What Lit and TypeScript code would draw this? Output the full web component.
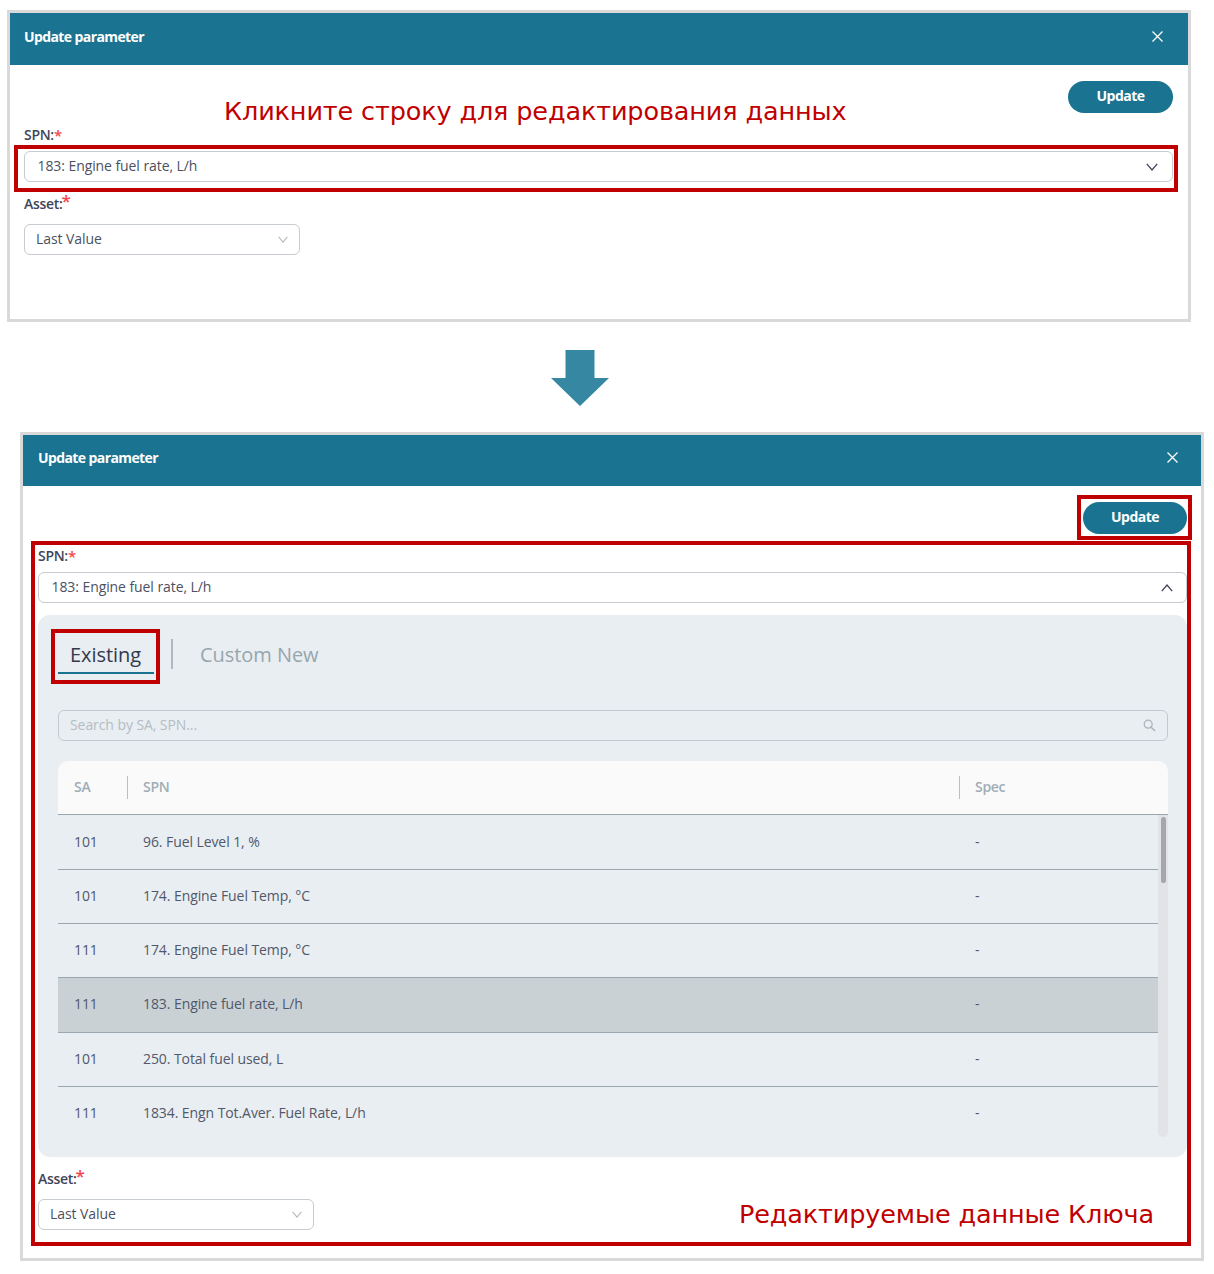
import { LitElement, html, css, svg } from "lit";
import { customElement } from "lit/decorators.js";

const ROWS = [
  ["101", "96. Fuel Level 1, %", false],
  ["101", "174. Engine Fuel Temp, °C", false],
  ["111", "174. Engine Fuel Temp, °C", false],
  ["111", "183. Engine fuel rate, L/h", true],
  ["101", "250. Total fuel used, L", false],
  ["111", "1834. Engn Tot.Aver. Fuel Rate, L/h", false],
] as const;

const chevron = (d: string, cls: string) => html`<svg class=${cls} viewBox="0 0 12 8" preserveAspectRatio="none"><path d=${d} fill="none" stroke-width="1.3"/></svg>`;
const DOWN = "M.8.9 6 6.9 11.2.9";
const UP = "M.8 7.1 6 1.1 11.2 7.1";

@customElement("app-root")
export class AppRoot extends LitElement {
  static styles = css`
    :host { display: block; width: 1214px; height: 1274px; background: #fff; overflow: hidden; font-family: "Open Sans", "Noto Sans", sans-serif; color: #4b5162; }
    * { box-sizing: border-box; }
    .page { display: flex; flex-direction: column; align-items: flex-start; padding-top: 10px; }
    .panel { position: relative; width: 1184px; border: 3px solid #d9d9d9; background: #fff; display: flex; flex-direction: column; }
    .first { margin-left: 7px; height: 312px; }
    .second { margin-left: 20px; height: 829px; }
    .arrow { display: block; margin: 28px 0 26px 551px; }
    .head { height: 52px; flex: none; background: #1a7491; color: #fff; display: flex; align-items: center; justify-content: space-between; padding: 0 25px 5px 14px; font-size: 14px; font-weight: 700; letter-spacing: -.6px; }
    .second .head { height: 51px; padding: 0 23px 6px 15px; }
    .head svg { display: block; }
    .body { padding: 16px 15px 0 14px; display: flex; flex-direction: column; }
    .second .body { padding: 16px 14px 0 15px; }
    .actions { display: flex; justify-content: flex-end; height: 32px; }
    .update { width: 105px; height: 32px; border: 0; padding: 0 0 3px; border-radius: 16px; background: #1a7491; color: #fff; font: 700 14px "Open Sans", sans-serif; letter-spacing: -.5px; }
    .second .update { width: 104px; }
    .label { height: 38px; display: flex; align-items: flex-end; padding-bottom: 6px; font-size: 14px; font-weight: 600; line-height: 20px; letter-spacing: -.3px; color: #3f4557; }
    .label b { color: #f5424f; font-weight: 600; font-size: 15px; }
    .asset { height: 42px; padding-bottom: 10px; }
    .asset b { font-size: 17px; line-height: 20px; margin: 0 0 3px -1px; }
    .select { height: 31px; border: 1px solid #c6ccd1; border-radius: 6px; background: #fff; display: flex; align-items: center; justify-content: space-between; font-size: 14px; letter-spacing: -.08px; padding: 0 14px 2px 12.5px; }
    .second .select { padding-right: 13px; }
    .select svg { width: 12px; height: 8px; margin-top: 2px; display: block; }
    .second .select.small, .select.small { width: 276px; padding: 0 11px 2px 11px; }
    .select.small svg { width: 10px; height: 7px; }
    .dark { stroke: #3e4358; }
    .light { stroke: #b3bac0; }
    .sub { margin-top: 12px; height: 542px; background: #e9eef2; border-radius: 12px; padding: 0 19px 0 20px; display: flex; flex-direction: column; }
    .tabs { height: 95px; display: flex; align-items: flex-start; font-size: 20px; letter-spacing: -.05px; }
    .tab { width: 96px; height: 35px; margin-top: 24px; padding-right: 1px; text-align: center; border-bottom: 2px solid #1a7491; color: #33394d; line-height: 32px; }
    .sep { width: 2px; height: 30px; margin: 24px 0 0 17px; background: #aeb8be; }
    .other { margin: 24px 0 0 27px; line-height: 32px; color: #97a6ad; }
    .search { height: 31px; flex: none; border: 1px solid #c3cacf; border-radius: 6px; display: flex; align-items: center; justify-content: space-between; padding: 0 11px 2px 11px; font-size: 14px; letter-spacing: -.08px; color: #b3bdc4; }
    .search svg { margin-top: 2px; }
    .table { margin-top: 20px; position: relative; }
    .thead { height: 54px; background: #fafafa; border-radius: 10px 10px 0 0; border-bottom: 1px solid #9aa7af; display: flex; align-items: center; font-size: 14px; font-weight: 600; color: #9fadb7; letter-spacing: -.3px; }
    .cell-sa { width: 69px; padding-left: 16px; flex: none; }
    .cell-spn { width: 832px; flex: none; }
    .cell-spec { flex: 1; padding-left: 15px; }
    .thead > div { height: 23px; line-height: 21px; }
    .thead .cell-sa { border-right: 1px solid #b6c0c6; width: 70px; }
    .thead .cell-spn { padding-left: 15px; border-right: 1px solid #b6c0c6; width: 832px; }
    .tbody { display: flex; height: 322px; overflow: hidden; }
    .rows { width: 1100px; flex: none; }
    .row { height: 54.2px; border-bottom: 1px solid #9aa7af; display: flex; align-items: center; padding-bottom: 2px; font-size: 14px; letter-spacing: -.08px; color: #52586a; }
    .row:first-child { height: 55px; }
    .row .cell-spn { padding-left: 16px; width: 834px; }
    .row .cell-spec { padding-left: 14px; }
    .row.sel { background: #c9d1d5; }
    .track { width: 10px; background: #e1e3e6; border-radius: 0 0 5px 5px; padding: 2px 2px 0 2.5px; }
    .thumb { height: 66px; border-radius: 3px; background: #a3a6ad; }
    .mark { position: absolute; border: 4px solid #c00000; pointer-events: none; }
    .note { position: absolute; color: #c00000; font-family: "DejaVu Sans", Verdana, sans-serif; font-size: 25.5px; letter-spacing: -.13px; line-height: 32px; white-space: nowrap; }
    .m1 { left: 4px; top: 132px; width: 1164px; height: 47px; }
    .n1 { left: 214px; top: 82px; }
    .m2 { left: 8px; top: 106px; width: 1160px; height: 705px; }
    .m3 { left: 1054px; top: 60px; width: 115px; height: 45px; }
    .m4 { left: 28px; top: 194px; width: 109px; height: 55px; }
    .n2 { left: 716px; top: 763px; }
  `;

  private label(text: string, asset = false) {
    return html`<div class="label ${asset ? "asset" : ""}">${text}<b>*</b></div>`;
  }

  private header() {
    return html`<div class="head">Update parameter
      <svg width="11" height="11" viewBox="0 0 11 11"><path d="M.5.5 10.5 10.5M10.5.5.5 10.5" stroke="#fff" stroke-width="1.3" fill="none"/></svg>
    </div>`;
  }

  private assetField() {
    return html`${this.label("Asset:", true)}
      <div class="select small">Last Value ${chevron(DOWN, "light")}</div>`;
  }

  render() {
    return html`<div class="page">
      <section class="panel first">
        ${this.header()}
        <div class="body">
          <div class="actions"><button class="update">Update</button></div>
          ${this.label("SPN:")}
          <div class="select">183: Engine fuel rate, L/h ${chevron(DOWN, "dark")}</div>
          ${this.assetField()}
        </div>
        <div class="mark m1"></div>
        <div class="note n1">Кликните строку для редактирования данных</div>
      </section>

      <svg class="arrow" width="58" height="56" viewBox="0 0 58 56"><path d="M14.5 0h29v28H58L29 56 0 28h14.5z" fill="#3587a2"/></svg>

      <section class="panel second">
        ${this.header()}
        <div class="body">
          <div class="actions"><button class="update">Update</button></div>
          ${this.label("SPN:")}
          <div class="select">183: Engine fuel rate, L/h ${chevron(UP, "dark")}</div>
          <div class="sub">
            <div class="tabs">
              <div class="tab">Existing</div>
              <div class="sep"></div>
              <div class="other">Custom New</div>
            </div>
            <div class="search">Search by SA, SPN...
              <svg width="13" height="13" viewBox="0 0 13 13" fill="none" stroke="#aab3b9">${svg`<circle cx="5.2" cy="5.2" r="4" stroke-width="1.2"/><path d="M8.2 8.2 12 12" stroke-width="1.6"/>`}</svg>
            </div>
            <div class="table">
              <div class="thead">
                <div class="cell-sa">SA</div>
                <div class="cell-spn">SPN</div>
                <div class="cell-spec">Spec</div>
              </div>
              <div class="tbody">
                <div class="rows">
                  ${ROWS.map(([sa, spn, sel]) => html`<div class="row ${sel ? "sel" : ""}">
                    <div class="cell-sa">${sa}</div>
                    <div class="cell-spn">${spn}</div>
                    <div class="cell-spec">-</div>
                  </div>`)}
                </div>
                <div class="track"><div class="thumb"></div></div>
              </div>
            </div>
          </div>
          ${this.assetField()}
        </div>
        <div class="mark m2"></div>
        <div class="mark m3"></div>
        <div class="mark m4"></div>
        <div class="note n2">Редактируемые данные Ключа</div>
      </section>
    </div>`;
  }
}
